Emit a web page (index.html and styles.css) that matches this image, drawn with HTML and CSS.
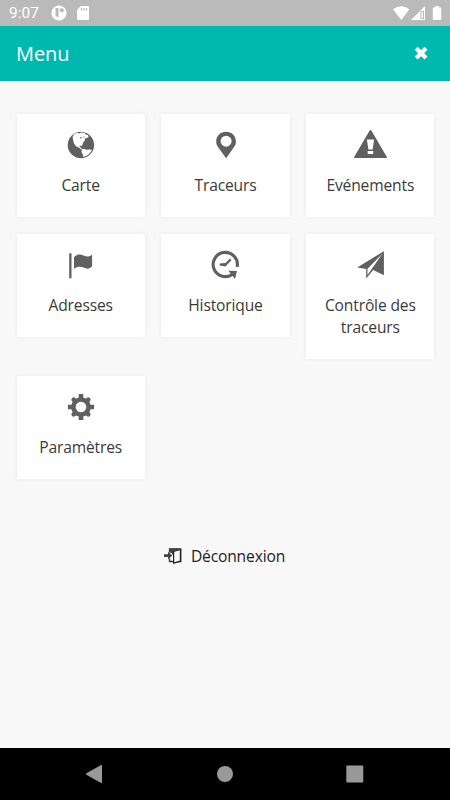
FILE: index.html
```html
<!DOCTYPE html>
<html lang="fr">

<head>
    <meta charset="UTF-8">
    <meta name="viewport" content="width=device-width, initial-scale=1.0">
    <title>Menu</title>
    <link rel="stylesheet" href="styles.css">
</head>

<body>
    <div class="status-bar">
        <span class="clock">9:07</span>
        <svg class="status-app" width="16" height="16" viewBox="0 0 16 16">
            <circle cx="8" cy="8" r="7.6" fill="#fff"/>
            <path d="M4.5 3h3v9.5a5 5 0 0 1-3-2z" fill="#bababa"/>
            <circle cx="10.8" cy="5.3" r="2.1" fill="#bababa"/>
        </svg>
        <svg class="status-card" width="12" height="14" viewBox="0 0 12 14">
            <path d="M4 0h7q1 0 1 1v12q0 1-1 1H1q-1 0-1-1V4z" fill="#fff"/>
            <path d="M4.5 2v2.5M7 2v2.5M9.5 2v2.5" stroke="#bababa" stroke-width="1.2"/>
        </svg>
        <svg class="status-signal" width="50" height="15" viewBox="0 0 50 15">
            <path d="M1 3.3Q9.2-2.6 17.5 3.3L9.3 14z" fill="#fff"/>
            <path d="M33 0v14H19z" fill="#fff"/>
            <path d="M29 5.5h2.5v7H29z" fill="none" stroke="#bababa" stroke-width="1.1"/>
            <path d="M43 1.5V0h4v1.5h1.3q.9 0 .9.9v10.7q0 .9-.9.9h-6.6q-.9 0-.9-.9V2.4q0-.9.9-.9z" fill="#fff"/>
        </svg>
    </div>

    <header class="header">
        <h1>Menu</h1>
        <svg class="close" width="14" height="14" viewBox="0 0 14 14">
            <path d="M2.2 1.2L12 11M12 1.2L2.2 11" stroke="#fff" stroke-width="4.2"/>
        </svg>
    </header>

    <main class="content">
        <div class="menu">
            <a class="item">
                <svg class="icon" viewBox="0 0 32 32">
                    <circle cx="15.9" cy="16" r="13.2"/>
                    <path class="cut" d="M7.6 8l1.6-3 3-1.2 2 .7 2-1 3.6.2 1.2 2 2 .4.5 1.8-1.4 1.2-1.9.2-.3 2-1.6 2-.7 2.1-1 1.6-1.7-.2-.4 1 1.5.9 1 1.3 1.7.4-.7.7-2.3-1.1-1.6-1.3-3.1-1.5-2.100-3-.7-2.900z"/>
                    <path class="cut" d="M16.700 20.700l2.200-.9 2.500 1 3.600-.3 2 .5-2.600 3.700-3.200 2.300-2.900 1-.4-2.500-1.400-2.200z"/>
                    <path d="M14.700 8.500l1.600-.6.600 1.100-1.500.5zM18.200 7.700l1.100-.2.200 1-1.100.1z"/>
                </svg>
                <span>Carte</span>
            </a>
            <a class="item">
                <svg class="icon" viewBox="0 0 32 32">
                    <path fill-rule="evenodd" d="M17.1 2.7C11.5 2.7 7.2 6.9 7.2 12.4c0 2.1.7 3.8 1.8 5.5L17.1 29.3l8-11.4c1.2-1.7 1.8-3.4 1.8-5.5C26.9 6.9 22.7 2.7 17.1 2.7zm0 4a5.5 5.5 0 1 1 0 11 5.5 5.5 0 0 1 0-11z"/>
                </svg>
                <span>Traceurs</span>
            </a>
            <a class="item">
                <svg class="icon icon-warning" viewBox="0 0 34 32">
                    <path d="M17.5 1q.5 0 1 .8l15.2 26q.6 1.2-.7 1.2H2q-1.3 0-.7-1.2l15.2-26q.5-.8 1-.8z"/>
                    <path class="cut" d="M13.9 10.6h7.2l-1.5 9.8h-4.2zM14.7 22h5.5v2.9h-5.5z"/>
                </svg>
                <span>Evénements</span>
            </a>
            <a class="item">
                <svg class="icon" viewBox="0 0 32 32">
                    <path d="M4.2 4.3h2.3v25H4.2z"/>
                    <path d="M9 8.2c3-3.3 6.3-3.3 9.6-1.7 3.3 1.5 5.7 1.4 8.5-.8v11.6c-2.4 2.9-5.2 3-8.5 1.3-3.3-1.5-6.6-1.3-9.6 1.1z"/>
                </svg>
                <span>Adresses</span>
            </a>
            <a class="item">
                <svg class="icon" viewBox="0 0 32 32">
                    <path class="line" stroke-width="3.1" d="M28.1 18A12.1 12.1 0 1 0 23.2 25.4"/>
                    <path d="M19.3 21.7l8.7.2-2 8z"/>
                    <path class="line" stroke-width="2.2" d="M21.7 10.4l-5.2 5.2"/>
                    <path d="M10.7 14.6l5.3-.6 1.9 1.5-1.2 2.1-6-1z"/>
                </svg>
                <span>Historique</span>
            </a>
            <a class="item">
                <svg class="icon" viewBox="0 0 32 32">
                    <path d="M29.9 2.2v24l-10.7-5.3L12.2 29.6v-9.7L3.2 18.4z"/>
                    <path class="cut" d="M28.3 4.8L13.5 19.8v6.2z"/>
                </svg>
                <span>Contrôle des traceurs</span>
            </a>
            <a class="item">
                <svg class="icon" viewBox="0 0 32 32">
                    <path class="line" stroke-width="4.6" d="M16 2.9v26.2M2.9 16h26.2"/>
                    <path class="line" stroke-width="4.6" stroke-linecap="round" d="M8.7 8.7l14.6 14.6M23.3 8.7L8.7 23.3"/>
                    <circle cx="16" cy="16" r="9.8"/>
                    <circle class="cut" cx="16" cy="16" r="5.3"/>
                </svg>
                <span>Paramètres</span>
            </a>
        </div>

        <a class="logout">
            <svg width="18" height="16" viewBox="0 0 18 16">
                <path d="M5.5 4V1h11.3v12.6H11M5.5 10.5v3H10" fill="none" stroke="#333" stroke-width="1.3"/>
                <path d="M5 .5h11l-6 3v5L7.5 5 5 4.5z" fill="#444"/>
                <path d="M9.6 3.5l6.8-2v11.7l-6.8 2z" fill="#f8f8f8" stroke="#222" stroke-width="1.2"/>
                <path d="M0 6.3h4V3.7l4.3 3.9L4 11.5V8.9H0z" fill="#444"/>
            </svg>
            <span>Déconnexion</span>
        </a>
    </main>

    <nav class="nav-bar">
        <svg width="18" height="18" viewBox="0 0 18 18"><path d="M.4 8.3L15.1.1q.9-.3.9.6v16.6q0 .9-.9.6L.4 9.7q-.8-.7 0-1.4z"/></svg>
        <svg width="18" height="18" viewBox="0 0 18 18"><circle cx="9" cy="9" r="8"/></svg>
        <svg width="18" height="18" viewBox="0 0 18 18"><rect x=".3" y=".5" width="17" height="17" rx="1"/></svg>
    </nav>
</body>

</html>
```
FILE: styles.css
```css
body {
    display: flex;
    flex-direction: column;
    height: 800px;
    margin: 0;
    font-family: 'Open Sans', sans-serif;
    background-color: #f8f8f8;
    color: #3a3a3a;
}

svg {
    display: block;
    flex-shrink: 0;
}

.status-bar {
    display: flex;
    align-items: center;
    height: 26px;
    padding: 0 8px 0 9px;
    background-color: #bababa;
    color: #fff;
}

.clock {
    width: 42px;
    font-family: Roboto, sans-serif;
    font-size: 15.5px;
    line-height: 26px;
}

.status-card {
    margin-left: 10px;
}

.status-signal {
    margin-left: auto;
}

.header {
    display: flex;
    align-items: center;
    justify-content: space-between;
    height: 55px;
    padding: 0 22px 0 16px;
    background-color: #00b9ae;
    color: #fff;
}

h1 {
    margin: 0;
    font-size: 20px;
    font-weight: 400;
    letter-spacing: -0.1px;
}

.content {
    flex: 1;
    padding: 33px 15.5px 0 16.5px;
}

.menu {
    display: grid;
    grid-template-columns: repeat(3, 1fr);
    align-items: start;
    gap: 17px 16.5px;
}

.item {
    display: flex;
    flex-direction: column;
    align-items: center;
    min-height: 103px;
    box-sizing: border-box;
    padding: 15px 8px 21px;
    background-color: #fff;
    box-shadow: 0 0 4px rgba(0, 0, 0, 0.07);
    font-size: 15.6px;
    line-height: 22px;
    letter-spacing: -0.15px;
    text-align: center;
}

.icon {
    width: 32px;
    height: 32px;
    margin-bottom: 13px;
    fill: #606060;
}

.icon-warning {
    width: 34px;
}

.icon .cut {
    fill: #fff;
}

.icon .line {
    fill: none;
    stroke: #606060;
}

.logout {
    display: flex;
    align-items: center;
    justify-content: center;
    gap: 9px;
    margin: 65px 2px 0 0;
    font-size: 15.6px;
    line-height: 24px;
    letter-spacing: -0.15px;
    color: #222;
}

.nav-bar {
    display: flex;
    align-items: center;
    justify-content: space-between;
    height: 52px;
    padding: 0 86px;
    background-color: #000;
    fill: #999;
}
```
